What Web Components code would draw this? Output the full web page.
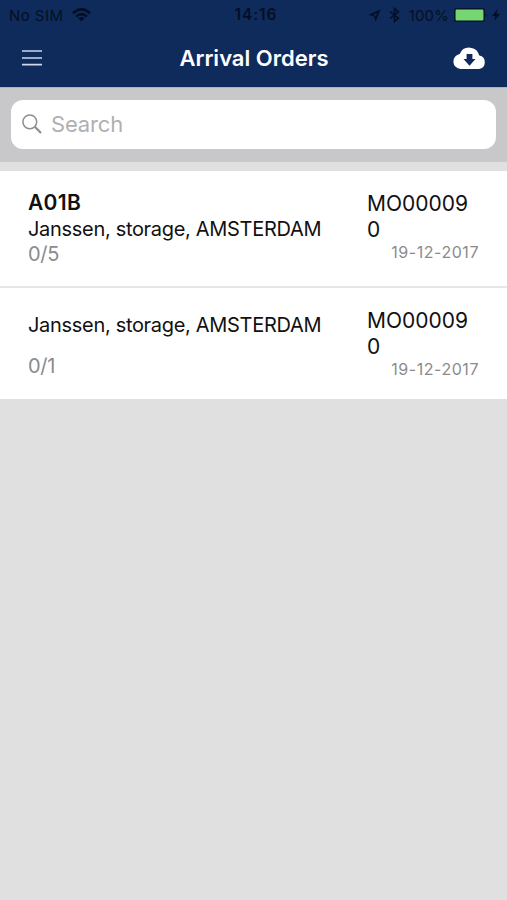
<!DOCTYPE html>
<html lang="en">
<head>
<meta charset="utf-8">
<meta name="viewport" content="width=device-width, initial-scale=1">
<title>Arrival Orders</title>
<style>
  html, body {
    height: 100%;
    margin: 0;
  }

  body {
    background: #e0e0e0;
    color: #111;
    font-family: Inter, "Liberation Sans", sans-serif;
    overflow: hidden;
  }
</style>
</head>
<body>
<orders-app></orders-app>

<script>
class StatusBar extends HTMLElement {
  constructor() {
    super();
    this.attachShadow({ mode: "open" });
  }

  static get styles() {
    return `
      :host {
        display: grid;
        grid-template-columns: 1fr auto 1fr;
        align-items: center;
        height: 29px;
        padding: 0 7px 0 9px;
        box-sizing: border-box;
        color: #050f24;
        font-size: 15px;
        line-height: 29px;
      }

      .side {
        display: flex;
        align-items: center;
      }

      .carrier {
        letter-spacing: 0.45px;
      }

      .wifi {
        margin-left: 9px;
      }

      .time {
        font-size: 15.5px;
        font-weight: 600;
        letter-spacing: 0.9px;
        line-height: 30px;
        padding-left: 3px;
      }

      .end {
        justify-content: flex-end;
      }

      .arrow {
        margin-right: 8px;
      }

      .bluetooth {
        margin-right: 9px;
      }

      .percent {
        letter-spacing: 0.1px;
        margin-right: 5px;
      }

      .bolt {
        margin-left: 4px;
      }
    `;
  }

  connectedCallback() {
    this.render();
  }

  render() {
    this.shadowRoot.innerHTML = `
    <style>${StatusBar.styles}</style>
    <div class="side">
      <span class="carrier">No SIM</span>
      <svg class="wifi" width="19" height="14" viewBox="0 0 19 14">
        <g fill="none" stroke="currentColor" stroke-width="2.6">
          <path d="M1 5.2 Q9.5 -2.5 18 5.2"/>
          <path d="M4.1 8.6 Q9.5 3.7 14.9 8.6"/>
        </g>
        <path d="M6.3 10.3 Q9.5 7.6 12.7 10.3 L9.5 13.5 Z" fill="currentColor"/>
      </svg>
    </div>
    <span class="time">14:16</span>
    <div class="side end">
      <svg class="arrow" width="13" height="13" viewBox="0 0 13 13">
        <path d="M12.7 0.3 L7.6 12.5 L6 7.2 L0.3 5.9 Z M9.2 4 L4.6 5.8 L7 6.2 L7.6 8.2 Z" fill="currentColor" fill-rule="evenodd"/>
      </svg>
      <svg class="bluetooth" width="11" height="16" viewBox="0 0 11 16">
        <path d="M1 4.5 L9.5 11.3 L5.5 14.5 V1.5 L9.5 4.7 L1 11.5" fill="none" stroke="currentColor" stroke-width="1.6"/>
      </svg>
      <span class="percent">100%</span>
      <svg width="34" height="14" viewBox="0 0 34 14">
        <rect x="0.8" y="0.8" width="29.4" height="12.4" rx="2" fill="#76d672" stroke="#07152f" stroke-width="1.5"/>
        <path d="M31.7 4.7 Q33.5 7 31.7 9.3 Z" fill="#07152f"/>
      </svg>
      <svg class="bolt" width="8" height="12" viewBox="0 0 8 12">
        <path d="M5.5 0 L0 7 H3.3 L2.3 12 L8 4.8 H4.6 Z" fill="currentColor"/>
      </svg>
    </div>`;
  }
}

customElements.define("status-bar", StatusBar);

class NavBar extends HTMLElement {
  constructor() {
    super();
    this.attachShadow({ mode: "open" });
  }

  static get styles() {
    return `
      :host {
        display: grid;
        grid-template-columns: 1fr auto 1fr;
        align-items: center;
        height: 58px;
        padding: 0 21px 0 22px;
        box-sizing: border-box;
        color: #fff;
      }

      h1 {
        margin: 0;
        font-size: 22px;
        font-weight: 600;
        line-height: 58px;
      }

      svg {
        display: block;
        margin-bottom: 1px;
      }

      .cloud {
        justify-self: end;
      }
    `;
  }

  connectedCallback() {
    this.render();
  }

  render() {
    this.shadowRoot.innerHTML = `
    <style>${NavBar.styles}</style>
    <svg width="20" height="18" viewBox="0 0 20 18">
      <path d="M0 2 H20 M0 9 H20 M0 15.6 H20" stroke="#cfd8e8" stroke-width="1.6"/>
    </svg>
    <h1><slot></slot></h1>
    <svg class="cloud" width="33" height="22" viewBox="0 0 33 22">
      <path d="M7.5 22 A7.5 7.5 0 0 1 6.7 7.1 A10.3 10.3 0 0 1 26.3 8.6 A6.8 6.8 0 0 1 26 22 Z" fill="#fff"/>
      <path d="M13.6 7 H19.4 V12.1 H22.5 L16.5 18.7 L10.5 12.1 H13.6 Z" fill="#0e2b5c"/>
    </svg>`;
  }
}

customElements.define("nav-bar", NavBar);

class SearchBar extends HTMLElement {
  constructor() {
    super();
    this.attachShadow({ mode: "open" });
  }

  static get styles() {
    return `
      :host {
        display: block;
        padding: 12px 11px 13px;
        background: #c8c8cb;
        border-top: 1px solid #aeb5c2;
      }

      .field {
        display: flex;
        align-items: center;
        gap: 9px;
        height: 49px;
        padding: 0 11px 2px;
        box-sizing: border-box;
        border-radius: 12px;
        background: #fff;
        color: #b0b0b2;
        font-size: 22px;
        letter-spacing: -0.15px;
      }
    `;
  }

  connectedCallback() {
    this.render();
  }

  render() {
    this.shadowRoot.innerHTML = `
    <style>${SearchBar.styles}</style>
    <div class="field">
      <svg width="20" height="20" viewBox="0 0 20 20">
        <circle cx="7.8" cy="7.8" r="6.9" fill="none" stroke="#8e8e91" stroke-width="1.5"/>
        <path d="M12.8 12.8 L19 19" stroke="#8e8e91" stroke-width="2.2"/>
      </svg>
      <span><slot></slot></span>
    </div>`;
  }
}

customElements.define("search-bar", SearchBar);

class OrderRow extends HTMLElement {
  constructor() {
    super();
    this.attachShadow({ mode: "open" });
  }

  static get styles() {
    return `
      :host {
        display: flex;
        justify-content: space-between;
        height: var(--row-height, 115px);
        padding: 19px 28px 0;
        box-sizing: border-box;
        background: #fff;
        font-size: 20px;
        line-height: 26px;
      }

      .info {
        display: flex;
        flex-direction: column;
        gap: var(--row-gap, 0);
        margin-top: var(--info-offset, 0);
      }

      .code {
        font-size: 21px;
        font-weight: 600;
        letter-spacing: 0.3px;
      }

      .place {
        letter-spacing: -0.31px;
      }

      .count {
        color: #8b8b8b;
        line-height: 25px;
        letter-spacing: -0.3px;
      }

      .meta {
        width: 112px;
      }

      .number {
        width: 104px;
        padding-top: 1px;
        font-size: 21px;
        line-height: 25.5px;
        word-break: break-all;
      }

      .date {
        color: #8b8b8b;
        font-size: 16px;
        line-height: 20px;
        text-align: right;
        letter-spacing: 0.55px;
      }
    `;
  }

  connectedCallback() {
    this.render();
  }

  render() {
    const code = this.getAttribute("code");

    this.shadowRoot.innerHTML = `
    <style>${OrderRow.styles}</style>
    <div class="info">
      ${code ? `<div class="code">${code}</div>` : ""}
      <div class="place"><slot></slot></div>
      <div class="count">${this.getAttribute("count")}</div>
    </div>
    <div class="meta">
      <div class="number">${this.getAttribute("number")}</div>
      <div class="date">${this.getAttribute("date")}</div>
    </div>`;
  }
}

customElements.define("order-row", OrderRow);

class OrdersApp extends HTMLElement {
  constructor() {
    super();
    this.attachShadow({ mode: "open" });
  }

  static get styles() {
    return `
      :host {
        display: block;
        min-height: 100vh;
        background: #e0e0e0;
      }

      header {
        background: #0e2b5c;
      }

      .orders {
        display: flex;
        flex-direction: column;
        gap: 2px;
        margin-top: 9px;
        background: #e6e6e6;
      }

      .uncoded {
        --row-height: 111px;
        --row-gap: 16px;
        --info-offset: 5px;
      }
    `;
  }

  connectedCallback() {
    this.render();
  }

  render() {
    this.shadowRoot.innerHTML = `
    <style>${OrdersApp.styles}</style>
    <header>
      <status-bar></status-bar>
      <nav-bar>Arrival Orders</nav-bar>
    </header>
    <search-bar>Search</search-bar>
    <div class="orders">
      <order-row code="A01B" count="0/5" number="MO000090" date="19-12-2017">Janssen, storage, AMSTERDAM</order-row>
      <order-row class="uncoded" count="0/1" number="MO000090" date="19-12-2017">Janssen, storage, AMSTERDAM</order-row>
    </div>`;
  }
}

customElements.define("orders-app", OrdersApp);
</script>
</body>
</html>
